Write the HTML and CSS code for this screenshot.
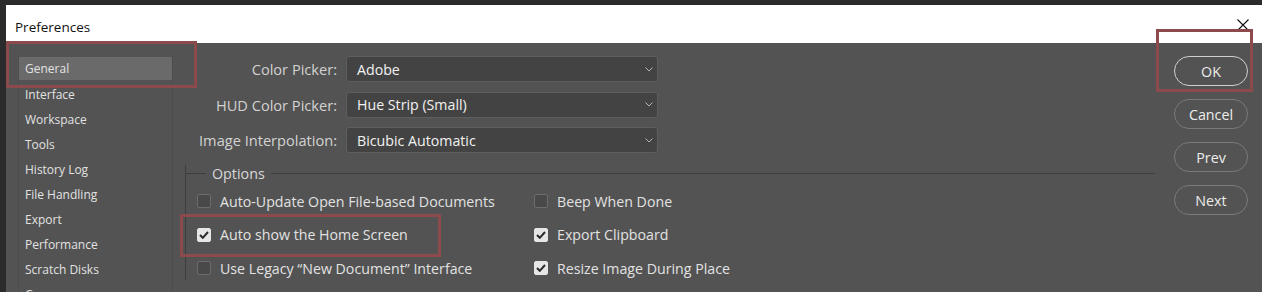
FILE: index.html
```html
<!DOCTYPE html>
<html lang="en">
<head>
    <meta charset="UTF-8">
    <meta name="viewport" content="width=device-width, initial-scale=1.0">
    <title>Preferences</title>
    <link rel="stylesheet" href="styles.css">
</head>
<body>
    <div class="window">
        <div class="titlebar">
            <span class="title">Preferences</span>
            <svg class="close" width="12" height="12" viewBox="0 0 12 12">
                <path d="M0.5 0.5 L11.5 11.5 M11.5 0.5 L0.5 11.5" stroke="#111" stroke-width="1.1" fill="none"/>
            </svg>
        </div>
        <div class="dialog">
            <ul class="nav">
                <li class="active">General</li>
                <li>Interface</li>
                <li>Workspace</li>
                <li>Tools</li>
                <li>History Log</li>
                <li>File Handling</li>
                <li>Export</li>
                <li>Performance</li>
                <li>Scratch Disks</li>
                <li>Cursors</li>
            </ul>
            <div class="main">
                <div class="fields">
                    <label>Color Picker:</label>
                    <div class="select">Adobe<svg class="chev" width="8" height="5" viewBox="0 0 8 5"><path d="M0.5 0.5 L4 4 L7.5 0.5" stroke="#b5b5b5" fill="none"/></svg></div>
                    <label>HUD Color Picker:</label>
                    <div class="select">Hue Strip (Small)<svg class="chev" width="8" height="5" viewBox="0 0 8 5"><path d="M0.5 0.5 L4 4 L7.5 0.5" stroke="#b5b5b5" fill="none"/></svg></div>
                    <label>Image Interpolation:</label>
                    <div class="select">Bicubic Automatic<svg class="chev" width="8" height="5" viewBox="0 0 8 5"><path d="M0.5 0.5 L4 4 L7.5 0.5" stroke="#b5b5b5" fill="none"/></svg></div>
                </div>
                <div class="options">
                    <div class="legend"><span>Options</span></div>
                    <div class="opt-grid">
                        <div class="opt"><span class="box"></span>Auto-Update Open File-based Documents</div>
                        <div class="opt"><span class="box"></span>Beep When Done</div>
                        <div class="opt"><span class="box checked"><svg width="10" height="8" viewBox="0 0 10 8"><path d="M1 4 L3.8 6.8 L9 1" stroke="#2b2b2b" stroke-width="2" fill="none"/></svg></span>Auto show the Home Screen</div>
                        <div class="opt"><span class="box checked"><svg width="10" height="8" viewBox="0 0 10 8"><path d="M1 4 L3.8 6.8 L9 1" stroke="#2b2b2b" stroke-width="2" fill="none"/></svg></span>Export Clipboard</div>
                        <div class="opt"><span class="box"></span>Use Legacy “New Document” Interface</div>
                        <div class="opt"><span class="box checked"><svg width="10" height="8" viewBox="0 0 10 8"><path d="M1 4 L3.8 6.8 L9 1" stroke="#2b2b2b" stroke-width="2" fill="none"/></svg></span>Resize Image During Place</div>
                    </div>
                </div>
            </div>
            <div class="buttons">
                <button class="default">OK</button>
                <button>Cancel</button>
                <button>Prev</button>
                <button>Next</button>
            </div>
        </div>
    </div>
    <!-- annotation boxes drawn over the screenshot -->
    <div class="mark mark-general"></div>
    <div class="mark mark-ok"></div>
    <div class="mark mark-home"></div>
</body>
</html>
```
FILE: styles.css
```css
body {
    margin: 0;
    height: 292px;
    overflow: hidden;
    background-color: #2b2b2b;
    font-family: "Open Sans", "Noto Sans", sans-serif;
    position: relative;
}
.window {
    margin: 5px 0 0 6px;
    height: 287px;
    overflow: hidden;
    background-color: #535353;
}
.titlebar {
    height: 38px;
    background-color: #fff;
    display: flex;
    align-items: center;
    justify-content: space-between;
    padding: 0 13px 0 9px;
}
.title {
    font-size: 13.5px;
    color: #111;
    margin-top: 5px;
}
.close {
    margin-top: 1px;
}
.dialog {
    display: flex;
    align-items: flex-start;
}
.nav {
    list-style: none;
    margin: 13px 0 0 12px;
    padding: 1px 0 0 0;
    width: 153px;
    border-left: 1px solid #4d4d4d;
    border-right: 1px solid #4d4d4d;
    height: 235px;
}
.nav li {
    height: 25px;
    line-height: 26px;
    padding-left: 6px;
    font-size: 12px;
    color: #e2e2e2;
}
.nav li.active {
    background-color: #6a6a6a;
    height: 23px;
    line-height: 24px;
    margin-bottom: 2px;
}
.main {
    margin-left: 12px;
    width: 970px;
}
.fields {
    display: grid;
    grid-template-columns: 152px 312px;
    column-gap: 9px;
    row-gap: 9.5px;
    margin-top: 13px;
    align-items: center;
}
.fields label {
    text-align: right;
    font-size: 14.6px;
    color: #d2d2d2;
}
.select {
    height: 26px;
    box-sizing: border-box;
    background-color: #434343;
    border: 1px solid #5e5e5e;
    border-radius: 3px;
    display: flex;
    align-items: center;
    justify-content: space-between;
    padding: 0 4px 0 10px;
    font-size: 14.2px;
    color: #f2f2f2;
}
.options {
    margin-top: 20px;
    border-left: 1px solid #3e3e3e;
    height: 115px;
}
.legend {
    display: flex;
    align-items: center;
    height: 16px;
    margin-top: -8px;
}
.legend::before {
    content: "";
    width: 20px;
    border-top: 1px solid #3e3e3e;
}
.legend::after {
    content: "";
    flex: 1;
    border-top: 1px solid #3e3e3e;
}
.legend span {
    font-size: 14.3px;
    color: #d8d8d8;
    padding: 0 6px;
}
.opt-grid {
    display: grid;
    grid-template-columns: 337px 400px;
    row-gap: 9.5px;
    margin: 8px 0 0 11px;
}
.opt {
    display: flex;
    align-items: center;
    height: 24px;
    font-size: 14.2px;
    color: #e2e2e2;
}
.box {
    width: 14px;
    height: 14px;
    box-sizing: border-box;
    border: 1px solid #6c6c6c;
    background-color: #494949;
    border-radius: 2px;
    margin-right: 9px;
    display: flex;
    align-items: center;
    justify-content: center;
}
.box.checked {
    background-color: #e6e6e6;
    border-color: #e6e6e6;
}
.buttons {
    display: flex;
    flex-direction: column;
    gap: 13px;
    margin: 13px 0 0 19px;
}
.buttons button {
    width: 74px;
    height: 30px;
    flex: none;
    border-radius: 15px;
    border: 1px solid #7a7a7a;
    background-color: transparent;
    color: #ececec;
    font-family: inherit;
    font-size: 14.3px;
    padding: 0;
}
.buttons button.default {
    border: 1.5px solid #cfcfcf;
}
.mark {
    position: absolute;
    border: 3px solid #8c4a4d;
}
.mark-general {
    left: 6px;
    top: 41px;
    width: 185px;
    height: 41px;
}
.mark-ok {
    left: 1156px;
    top: 29px;
    width: 91px;
    height: 57px;
}
.mark-home {
    left: 180px;
    top: 214px;
    width: 255px;
    height: 37px;
}
```
